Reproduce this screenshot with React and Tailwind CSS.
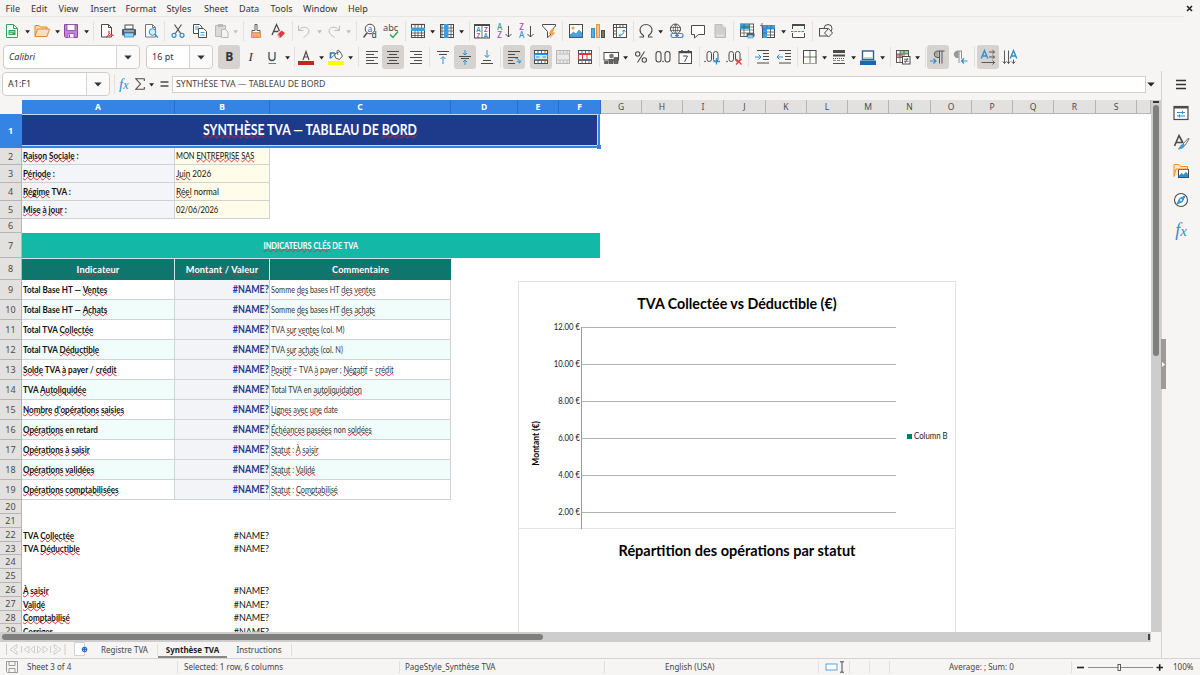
import { Fragment } from "react";

const K = "#4b4b4b";
const B = "#2f8fd0";

// toolbar icons, all drawn on a 16px box
const icons = {
  newDoc: (
    <>
      <path d="M2.5 1.5h7l4 4v9h-11z" fill="#fff" stroke="#36a55c" />
      <path d="M9.5 1.5v4h4" fill="none" stroke="#36a55c" />
      <rect x="4.5" y="7" width="7" height="5" fill="#36a55c" />
      <path d="M5.5 8.8h5M5.5 10.5h3" stroke="#fff" strokeWidth=".7" />
    </>
  ),
  open: (
    <>
      <path d="M1 13.5v-11h4l1.5 1.5h6.5v2" fill="#f9d9ae" stroke="#dd8a32" />
      <path d="M1 13.5 3.5 6h12l-2.5 7.5z" fill="#fbdfb8" stroke="#dd8a32" />
    </>
  ),
  save: (
    <>
      <path d="M1.5 1.5h13v13h-12l-1-1z" fill="#c583d6" stroke="#8e44a5" />
      <rect x="4" y="1.5" width="8" height="6" fill="#fff" stroke="#8e44a5" strokeWidth=".8" />
      <path d="M5 14.5v-4h6v4" fill="#fff" stroke="#8e44a5" strokeWidth=".8" />
      <path d="M6.5 11.5v3" stroke="#8e44a5" />
    </>
  ),
  pdf: (
    <>
      <path d="M2.5 1.5h7l3 3v9.5h-10z" fill="#fff" stroke={K} />
      <path d="M9.5 1.5v3h3" fill="none" stroke={K} />
      <path d="M7 14.5c3-2 3.5-5 3-6.5-1.2.5.3 4 4.5 4.3-2-.7-5 .2-7.5 2.2z" fill="#fff" stroke="#d9373d" strokeWidth=".9" />
    </>
  ),
  print: (
    <>
      <rect x="4" y="2" width="8" height="4" fill="#fff" stroke={K} />
      <rect x="1" y="6" width="14" height="6.5" rx="1" fill="#5a5a5a" />
      <path d="M3 8h10" stroke="#8ec9ec" strokeWidth="1.5" />
      <rect x="3.5" y="10" width="9" height="4" fill="#9fd1f0" stroke={B} strokeWidth=".8" />
    </>
  ),
  preview: (
    <>
      <path d="M2.5 1.5h7l3 3v9.5h-10z" fill="#fff" stroke="#777" />
      <path d="M9.5 1.5v3h3" fill="none" stroke="#777" />
      <circle cx="9.5" cy="9" r="3.3" fill="#d5ebf8" stroke={B} />
      <path d="m12 11.5 3 3" stroke={B} strokeWidth="1.3" />
    </>
  ),
  cut: (
    <>
      <path d="M4.5 1.5 11 11M11.5 1.5 5 11" stroke={K} fill="none" strokeWidth="1.1" />
      <circle cx="4" cy="12.3" r="2" fill="none" stroke={B} strokeWidth="1.2" />
      <circle cx="12" cy="12.3" r="2" fill="none" stroke={B} strokeWidth="1.2" />
    </>
  ),
  copy: (
    <>
      <path d="M1.5 1.5h6l2.5 2.5v6.5h-8.5z" fill="#fff" stroke={K} />
      <path d="M6.5 5.5h5l3 3v6h-8z" fill="#fff" stroke={K} />
      <path d="M3 4h4M3 6h3M8.5 9.5h4M8.5 12h4" stroke={B} strokeWidth=".9" />
    </>
  ),
  paste: (
    <>
      <path d="M1.5 2.5h10v11h-10z" fill="#d9d9d9" stroke="#b9b9b9" />
      <rect x="4" y="1" width="5" height="3" fill="#b9b9b9" />
      <path d="M7.5 6.5h4l2.5 2.5v5.5h-6.5z" fill="#f3f3f3" stroke="#b9b9b9" />
    </>
  ),
  brush: (
    <>
      <path d="M7 1.5h2v6h3v2.5h-8v-2.5h3z" fill="#fff" stroke={K} strokeWidth=".9" />
      <path d="M3.5 10h9v4.5h-9z" fill="#f6b26b" stroke="#e8923a" />
      <path d="M6 12v2.5M9 12v2.5" stroke="#e8923a" />
    </>
  ),
  clear: (
    <>
      <path d="M2 12 6.5 1.5 9.5 8M3.5 8.500h5" fill="none" stroke={K} strokeWidth="1.3" />
      <path d="m7.5 11.5 4-4 3.500 2.500-4 4.500-2 .5z" fill="#e0383e" />
      <path d="m7.5 11.5 2.5 3" stroke="#f5a3a5" strokeWidth="1.5" />
    </>
  ),
  undo: <path d="M2.5 2.5v5h5M3 7c3-4 10-3.5 10 1 0 3-3 4.5-5.5 6.5" fill="none" stroke="#bdbdbd" />,
  redo: <path d="M13.5 2.5v5h-5M13 7c-3-4-10-3.5-10 1 0 3 3 4.5 5.5 6.5" fill="none" stroke="#bdbdbd" />,
  find: (
    <>
      <circle cx="8" cy="6" r="4.8" fill="#fff" stroke={K} />
      <path d="M5 10 1.5 14.5" stroke={K} strokeWidth="1.4" />
      <text x="5.4" y="8.5" fontSize="8" fill={B} fontFamily="Noto Sans" fontWeight="600">a</text>
      <text x="9.5" y="15" fontSize="8.5" fill={K} fontFamily="Noto Sans" fontWeight="500">d</text>
    </>
  ),
  spell: (
    <>
      <text x="0" y="7.5" fontSize="9.2" fill={K} fontFamily="Noto Sans">abc</text>
      <path d="m7 11.5 3 3 5-6" fill="none" stroke="#2ba84a" strokeWidth="1.4" />
    </>
  ),
  row: (
    <>
      <rect x="1.5" y="1.5" width="13" height="13" fill="#fff" stroke={K} />
      <path d="M1.5 10h13M1.5 12.5h13M5 1.5v13M8 1.5v13M11.5 1.5v13" stroke={K} strokeWidth=".8" />
      <rect x="1" y="4.5" width="14" height="3.5" fill="#3f9edb" />
      <path d="M1 1.5h14" stroke={K} strokeWidth="1.2" />
    </>
  ),
  col: (
    <>
      <rect x="1.5" y="1.5" width="13" height="13" fill="#fff" stroke={K} />
      <path d="M1.5 5h13M1.5 8h13M1.5 11.5h13M12 1.5v13M3 1.5v13" stroke={K} strokeWidth=".8" />
      <rect x="5" y="1" width="4.5" height="14" fill="#3f9edb" />
    </>
  ),
  sort: (
    <>
      <rect x=".5" y="1.5" width="15" height="13.5" fill="#fff" stroke={K} />
      <path d="M0 2h16" stroke={K} strokeWidth="2" />
      <path d="M8 2v13" stroke={K} strokeWidth=".8" />
      <text x="2.2" y="8.7" fontSize="6.5" fill={B} fontFamily="Noto Sans" fontWeight="600">A</text>
      <text x="2.4" y="14.5" fontSize="6.5" fill="#a64bb8" fontFamily="Noto Sans" fontWeight="600">Z</text>
      <text x="10" y="8.7" fontSize="6.5" fill="#a64bb8" fontFamily="Noto Sans" fontWeight="600">Z</text>
      <text x="9.6" y="14.5" fontSize="6.5" fill={B} fontFamily="Noto Sans" fontWeight="600">A</text>
    </>
  ),
  az: (
    <>
      <text x="1" y="7" fontSize="8" fill={B} fontFamily="Noto Sans" fontWeight="500">A</text>
      <text x="1.3" y="15" fontSize="8" fill="#a64bb8" fontFamily="Noto Sans" fontWeight="500">Z</text>
      <path d="M12.5 3v11M9.500 11l3 3 3-3" fill="none" stroke={K} />
    </>
  ),
  za: (
    <>
      <text x="1.3" y="7" fontSize="8" fill="#a64bb8" fontFamily="Noto Sans" fontWeight="500">Z</text>
      <text x="1" y="15" fontSize="8" fill={B} fontFamily="Noto Sans" fontWeight="500">A</text>
      <path d="M12.5 3v11M9.500 11l3 3 3-3" fill="none" stroke={K} />
    </>
  ),
  filter: (
    <>
      <path d="M1.5 1.5h13v1.5l-5 5.5v3.500l-3 2.500V8.5l-5-5.5z" fill="#fff" stroke={K} />
      <path d="m11 6-3.500 5h3l-2 4.500 6-6h-3l2-3.500z" fill="#f4a043" />
    </>
  ),
  image: (
    <>
      <rect x="1.5" y="1.5" width="13" height="13" fill="#fff" stroke={K} />
      <path d="M2 14v-2l3.500-3 2.500 2 3-4 3 3v4z" fill="#4ba3dc" stroke={B} strokeWidth=".6" />
      <circle cx="5" cy="5" r="1.5" fill="#f4a043" />
    </>
  ),
  chart: (
    <>
      <rect x="1.5" y="5.5" width="3" height="9" fill="#5aaee3" stroke={B} />
      <rect x="6.5" y="1.5" width="3" height="13" fill="#f7c28a" stroke="#e8923a" />
      <rect x="11.5" y="7.5" width="3" height="7" fill="#777" stroke={K} />
    </>
  ),
  pivot: (
    <>
      <rect x="1.5" y="1.5" width="13" height="13" fill="#fff" stroke={K} />
      <path d="M1.5 4.5h13M4.5 1.5v13M8 2v2.5M11 2v2.5M2 8h2.5M2 11h2.5" stroke={K} strokeWidth=".9" />
      <path d="M7 12.5c3 0 5-2 5-5M7 12.5l1.5-1.7M7 12.5l1.7 1.5M12 7l-1.7 1.5M12 7l1.5 1.7" fill="none" stroke={B} />
    </>
  ),
  omega: (
    <path d="M1.5 14h4v-1.5C2.5 10.5 2 8.5 2 7c0-3 2.5-5.5 6-5.5s6 2.5 6 5.5c0 1.5-.5 3.5-3.5 5.5V14h4" fill="none" stroke={K} strokeWidth="1.1" />
  ),
  link: (
    <>
      <circle cx="7.5" cy="6" r="5" fill="#fff" stroke={K} />
      <path d="M2.5 4.5h10M2.5 7.5h10M7.5 1v10M7.5 1c-3 3-3 7 0 10M7.5 1c3 3 3 7 0 10" fill="none" stroke={K} strokeWidth=".7" />
      <rect x="3" y="10.5" width="6" height="4" rx="2" fill="#f6f5f4" stroke={B} strokeWidth="1.2" />
      <rect x="9" y="10.5" width="6" height="4" rx="2" fill="#f6f5f4" stroke={B} strokeWidth="1.2" />
      <path d="M7 12.5h4" stroke={B} />
    </>
  ),
  comment: <path d="M1.5 2.5h13v9h-6l-4 3.5v-3.5h-3z" fill="#fff" stroke={K} />,
  headFoot: (
    <>
      <path d="M3 1.5h7l3.5 3.5v9.5H3z" fill="#cfcfcf" stroke="#bcbcbc" />
      <path d="M10 1.5V5h3.5" fill="#eee" stroke="#bcbcbc" />
      <path d="M4.5 12.5h7" stroke="#e8e8e8" strokeWidth="1.5" />
    </>
  ),
  printArea: (
    <>
      <rect x="1.5" y="1" width="13" height="12.5" fill="#fff" stroke={K} strokeWidth=".9" />
      <rect x="1" y="1" width="9.5" height="5" fill="#3f9edb" />
      <path d="M1.5 4h13M1.5 7h13M1.5 10h13M5 1v12.5M10.5 1v12.5" stroke={K} strokeWidth=".7" />
      <rect x="7.5" y="10" width="8" height="4" rx="1" fill="#5a5a5a" />
      <rect x="9" y="12" width="5" height="3" fill="#9fd1f0" stroke={B} strokeWidth=".6" />
    </>
  ),
  freeze: (
    <>
      <rect x="2.5" y="2.5" width="12" height="12" fill="#fff" stroke={K} />
      <path d="M2.5 9h12M2.5 12h12M10.5 2.5v12" stroke={K} strokeWidth=".8" />
      <path d="M3 2h12v4H7v9H3z" fill="#3f9edb" />
      <path d="M3 6h12M3 10h4M7 2v4M11 2v4" stroke="#1a6ea8" strokeWidth=".7" />
      <path d="M2 0v5M0 2.500h5" stroke={B} />
    </>
  ),
  split: (
    <>
      <path d="M2.5 6V2h12v4M2.5 10v4.5h12V10" fill="#fff" stroke={K} />
      <path d="M2 2h13" stroke={K} strokeWidth="2" />
      <path d="M1 8.5h14" stroke={B} strokeDasharray="2.5 1" />
    </>
  ),
  shapes: (
    <>
      <circle cx="10" cy="5.5" r="4" fill="none" stroke={K} />
      <rect x="1.5" y="5.5" width="8" height="7.5" fill="#f6f5f4" stroke={K} />
      <path d="m10.5 5.500 4 4.500-4 4-4-4z" fill="#f6f5f4" stroke={K} />
    </>
  ),
  bold: <text x="4.3" y="12.4" fontSize="12" fontWeight="bold" fill="#333" fontFamily="Open Sans">B</text>,
  italic: <text x="5.5" y="12.4" fontSize="13" fontStyle="italic" fill="#333" fontFamily="Liberation Serif">I</text>,
  underline: (
    <>
      <path d="M5 3v6c0 3.3 6 3.3 6 0V3" fill="none" stroke={K} strokeWidth="1.3" />
      <path d="M4.5 14.5h7.5" stroke={B} />
    </>
  ),
  fontColor: (
    <>
      <path d="M5 11 8 2.5 11 11M5.8 8h4.500" fill="none" stroke={K} strokeWidth="1.2" />
      <rect x="0" y="12" width="16" height="4" fill="#c9211e" />
    </>
  ),
  highlight: (
    <>
      <path d="m6.500 5 5.500-2.500 2.500 4.500-3 3.500-4-1.500z" fill="#fff" stroke={K} strokeWidth=".9" />
      <path d="M10 6 9 2.500c0-1.800 2.300-1.800 2.500 0" fill="none" stroke={K} strokeWidth=".8" />
      <path d="M2.500 9.500V4h4.500" fill="none" stroke="#2a7ab0" strokeWidth="1.6" />
      <path d="m3 9 5-4.500" stroke="#2a7ab0" strokeWidth=".9" />
      <rect x="0" y="12" width="16" height="4" fill="#ffff00" />
    </>
  ),
  left: <path d="M2 2.5h12M2 5.5h8M2 8.5h12M2 11.5h8M2 14.5h12" stroke={K} />,
  center: <path d="M2 2.5h12M4 5.5h8M2 8.5h12M4 11.5h8M2 14.5h12" stroke={K} />,
  right: <path d="M2 2.5h12M6 5.5h8M2 8.5h12M6 11.5h8M2 14.5h12" stroke={K} />,
  top: (
    <>
      <path d="M2 2.5h12M4 5.5h8" stroke={K} />
      <path d="M8 15V8M5.5 10 8 7.5l2.5 2.5" fill="none" stroke={B} />
    </>
  ),
  middle: (
    <>
      <path d="M2 7.5h12M4 9.5h8" stroke={K} />
      <path d="M8 1v5M6 4l2 2 2-2M8 16v-5M6 13l2-2 2 2" fill="none" stroke={B} />
    </>
  ),
  bottom: (
    <>
      <path d="M4 11.5h8M2 14.5h12" stroke={K} />
      <path d="M8 1v7M5.5 6 8 8.5 10.5 6" fill="none" stroke={B} />
    </>
  ),
  wrap: (
    <>
      <path d="M2 2.5h12M2 5.5h7M2 8.5h10M2 11.5h5M2 14.5h7" stroke={K} />
      <path d="M9 9c3 0 4 1.5 4.5 4.5M11 12l2.5 2 1.500-2.500" fill="none" stroke={B} />
    </>
  ),
  merge: (
    <>
      <rect x="1.5" y="1.5" width="13" height="13" fill="#fff" stroke={K} />
      <path d="M1.5 4.5h13M1.5 11.5h13M5 1.5v3M8.5 1.5v3M12 1.5v3M5 11.5v3M8.5 11.5v3M12 11.5v3" stroke={K} strokeWidth=".8" />
      <rect x="1.5" y="5.5" width="13" height="5" fill="#d5ebf8" stroke={B} />
      <path d="M3 8h3.5M9.5 8H13" stroke={B} />
    </>
  ),
  unmerge: (
    <>
      <rect x="1.5" y="1.5" width="13" height="13" fill="#e9e9e9" stroke="#b5b5b5" />
      <path d="M1.5 5h13M1.5 11h13M5 1.5V5M8.5 1.5V5M12 1.5V5M5 11v3.5M8.5 11v3.5M12 11v3.5" stroke="#b5b5b5" strokeWidth=".8" />
    </>
  ),
  splitCells: (
    <>
      <rect x="1.5" y="1.5" width="13" height="13" fill="#fff" stroke={K} />
      <path d="M1.5 4.5h13M1.5 11.5h13M5 1.5v3M8.5 1.5v3M12 1.5v3M5 11.5v3M8.5 11.5v3M12 11.5v3" stroke={K} strokeWidth=".8" />
      <path d="M1.5 5.5h13M1.5 10.5h13M1.5 5.5v5M5.5 5.5v5M10 5.5v5M14.5 5.5v5" stroke="#d9373d" fill="none" />
    </>
  ),
  currency: (
    <>
      <rect x="1" y="3.5" width="14.5" height="7.5" fill="#fff" stroke={K} />
      <circle cx="8.5" cy="7" r="2.3" fill="#777" />
      <path d="M1.5 12.5h3.5v2H1.5zM6 10.5h4v4H6zM11 8.5h4v6h-4z" fill="#666" stroke={K} strokeWidth=".7" />
    </>
  ),
  percent: (
    <>
      <circle cx="4.7" cy="5" r="2.2" fill="none" stroke={K} strokeWidth="1.1" />
      <circle cx="11.3" cy="11" r="2.2" fill="none" stroke={K} strokeWidth="1.1" />
      <path d="M11.5 2.5 4.5 13.5" stroke={K} strokeWidth="1.1" />
    </>
  ),
  number: (
    <>
      <rect x="1" y="2.5" width="5" height="10.5" rx="2.5" fill="none" stroke={K} strokeWidth="1.1" />
      <rect x="10" y="2.5" width="5" height="10.5" rx="2.5" fill="none" stroke={K} strokeWidth="1.1" />
      <circle cx="8" cy="12.5" r=".8" fill={K} />
    </>
  ),
  date: (
    <>
      <rect x="2" y="2.5" width="12.5" height="12" fill="#fff" stroke={K} />
      <path d="M2 3.5h12.5M5 1v3M11.5 1v3" stroke={K} strokeWidth="1.5" />
      <path d="M6 7h4.500L7.500 13" fill="none" stroke={K} />
    </>
  ),
  decAdd: (
    <>
      <circle cx="1" cy="12.5" r=".8" fill={K} />
      <rect x="3" y="2.5" width="4.5" height="10" rx="2.2" fill="none" stroke={K} />
      <rect x="9.5" y="2.5" width="4.5" height="10" rx="2.2" fill="none" stroke={K} />
      <path d="M12.5 9v6.500M9.500 12.500h6.500" stroke={B} strokeWidth="1.3" />
    </>
  ),
  decDel: (
    <>
      <circle cx="1" cy="12.5" r=".8" fill={K} />
      <rect x="3" y="2.5" width="4.5" height="10" rx="2.2" fill="none" stroke={K} />
      <rect x="9.5" y="2.5" width="4.5" height="10" rx="2.2" fill="none" stroke={K} />
      <path d="m10 10 5.500 5.500M15.500 10 10 15.500" stroke="#e0383e" strokeWidth="1.3" />
    </>
  ),
  indent: (
    <>
      <path d="M3 1.5h12M9 4.5h6M9 7.5h6M9 10.5h6M3 14h12" stroke={K} />
      <path d="M1 8h6M4.5 5.5 7 8l-2.5 2.5" fill="none" stroke={B} />
    </>
  ),
  outdent: (
    <>
      <path d="M3 1.5h12M9 4.5h6M9 7.5h6M9 10.5h6M3 14h12" stroke={K} />
      <path d="M7 8H1M3.5 5.5 1 8l2.5 2.5" fill="none" stroke={B} />
    </>
  ),
  borders: (
    <>
      <rect x="1.5" y="1.5" width="12.5" height="13" fill="#fff" stroke={K} />
      <path d="M8 1.5v13M1.5 8h13" stroke={K} strokeWidth=".8" />
      <path d="M1.500 14.500h12.500" stroke="#e8923a" />
    </>
  ),
  borderStyle: (
    <>
      <path d="M2 2.5h12" stroke={K} strokeWidth="3" />
      <path d="M2 6.5h12" stroke={K} strokeWidth="2" />
      <path d="M2 9.5h12" stroke={K} strokeDasharray="1 1" />
      <path d="M2 11.5h12" stroke="#888" strokeDasharray="3 1" />
      <path d="M2 14.5h12" stroke={K} />
    </>
  ),
  borderColor: (
    <>
      <rect x="2.5" y="2" width="11" height="8.5" fill="#fff" stroke="#355f86" strokeWidth="1.4" />
      <path d="M4 9h8" stroke="#9fc4e4" strokeWidth="1.5" />
      <rect x="0" y="11.5" width="16" height="4.5" fill="#1f66b0" />
    </>
  ),
  conditional: (
    <>
      <rect x="1.5" y="1.5" width="12" height="12" fill="#fff" stroke={K} strokeWidth=".9" />
      <rect x="5" y="2" width="8" height="3" fill="#8fd19e" />
      <rect x="2" y="5" width="6" height="3.5" fill="#e98a8c" />
      <path d="M1.5 5h12M1.5 8.5h12M5 1.5v12M9 1.5v12" stroke={K} strokeWidth=".7" />
      <rect x="7.5" y="7.5" width="7.5" height="7.5" fill="#fff" stroke={K} />
      <path d="M9 10.3h4.5M9 12.3h4.5M12.5 9l-2.5 5" stroke={K} strokeWidth=".8" />
    </>
  ),
  ltr: (
    <>
      <path d="M8.5 9C2.5 9 3 2 8.5 2z" fill="#aaa" />
      <path d="M14.5 2H8C3 2 3 8.5 8 8.5h1M9.5 2v12.5M12 2v12.5" fill="none" stroke={K} strokeWidth=".9" />
      <path d="M0 12h6M3.5 9.5 6 12l-2.5 2.500" fill="none" stroke={B} strokeWidth="1.2" />
    </>
  ),
  rtl: (
    <>
      <path d="M6.5 9C.5 9 1 2 6.5 2z" fill="#999" />
      <path d="M10 2H6C1 2 1 8.500 6 8.500M7 2v12M9.500 2v8" fill="none" stroke="#888" strokeWidth=".9" />
      <path d="M15.5 12h-6M12 9.5 9.500 12l2.500 2.500" fill="none" stroke={B} strokeWidth="1.2" />
    </>
  ),
  horiz: (
    <>
      <path d="M1.2 9.5 4.5 1.5l3.3 8M2.5 7h4" fill="none" stroke={B} strokeWidth="1.4" />
      <path d="M9 3h5.500M12.5 1.2 14.5 3l-2 1.8M9 8h5.500M12.5 6.2l2 1.800-2 1.800M1.500 13.500h13M12.5 11.500l2 2-2 2" fill="none" stroke={K} strokeWidth=".9" />
    </>
  ),
  vert: (
    <>
      <path d="M8.2 9.5 11.5 1.5l3.300 8M9.500 7h4" fill="none" stroke={B} strokeWidth="1.4" />
      <path d="M2.5 1.5v13M.8 12.5l1.7 2 1.7-2M6.5 1.5v13M4.8 12.5l1.7 2 1.7-2M11.5 10.5v4M9.8 12.5l1.7 2 1.7-2" fill="none" stroke={K} strokeWidth=".9" />
    </>
  ),
  properties: (
    <>
      <rect x="1" y="1.5" width="14" height="13" fill="#fff" stroke={K} strokeWidth="1.2" />
      <path d="M1 2.5h14" stroke={K} strokeWidth="2" />
      <path d="M4 7.5h8M4 11h8M9.5 6v3M6.5 9.5v3" stroke={B} />
    </>
  ),
  styles: (
    <>
      <path d="M1.5 12 6 1.5 10 9M3 8.5h6" fill="none" stroke={K} strokeWidth="1.6" />
      <path d="m15.5 4-5.500 6 2 1.500 4-6.500z" fill="#fff" stroke={K} strokeWidth=".8" />
      <path d="M5 15c2 0 2-4.500 4.500-4.500 3 .5 2 4.500-4.500 4.500z" fill="#3f9edb" stroke={B} strokeWidth=".6" />
    </>
  ),
  gallery: (
    <>
      <path d="M1 13.5v-12h5l1.5 2h7v3" fill="#fde6c8" stroke="#e8923a" />
      <rect x="5.5" y="6.5" width="10" height="8" fill="#fff" stroke={K} />
      <path d="M6 14v-1.5L8.5 10l2 1.5L13 9l2 2v3z" fill="#2f8fd0" />
      <path d="M1 13.5 3 6h12" fill="none" stroke="#e8923a" />
    </>
  ),
  navigator: (
    <>
      <circle cx="8" cy="8" r="6.5" fill="#fff" stroke={K} strokeWidth="1.1" />
      <path d="M12 4 9.5 9.5 4 12l2.5-5.500z" fill="#3f9edb" stroke={B} />
      <circle cx="8" cy="8" r="1" fill="#fff" />
    </>
  ),
};

const Icon = ({ name }) => (
  <svg width="16" height="16" viewBox="0 0 16 16" className="shrink-0 overflow-visible">
    {icons[name]}
  </svg>
);

const Arrow = ({ off }) => (
  <svg width="7" height="4" viewBox="0 0 7 4" className="mt-0.5 shrink-0">
    <path d="M1.2.3h4.800L3.600 3.400z" fill={off ? "#bdbdbd" : "#222"} />
  </svg>
);

const gaps = {
  1: "ml-px",
  2: "ml-0.5",
  3: "ml-[3px]",
  4: "ml-1",
  5: "ml-[5px]",
  6: "ml-1.5",
  7: "ml-[7px]",
};

// [item, gap before it]. "v" = dropdown arrow, "x" = disabled arrow, "|" = separator, "*name" = pressed button
const standardBar = [
  ["newDoc", 4], ["v", 4], ["open", 3], ["v", 4], ["save", 2], ["v", 4], ["|", 3],
  ["pdf", 5], ["print", 6], ["preview", 6], ["|", 5],
  ["cut", 5], ["copy", 6], ["paste", 6], ["x", 2], ["|", 4],
  ["brush", 4], ["clear", 6], ["|", 6],
  ["undo", 3], ["x", 4], ["redo", 3], ["x", 3], ["|", 4],
  ["find", 5], ["spell", 5], ["|", 6],
  ["row", 4], ["v", 3], ["col", 3], ["v", 3], ["|", 4],
  ["sort", 4], ["az", 6], ["za", 6], ["filter", 7], ["|", 5],
  ["image", 5], ["chart", 6], ["pivot", 6], ["|", 5],
  ["omega", 4], ["v", 3], ["link", 4], ["comment", 6], ["headFoot", 6], ["|", 5],
  ["printArea", 5], ["freeze", 5], ["v", 4], ["split", 3], ["|", 6],
  ["shapes", 5],
];

const formatBar = [
  ["*bold", 5], ["italic", 3], ["underline", 5], ["v", 4], ["|", 3],
  ["fontColor", 3], ["v", 4], ["highlight", 3], ["v", 3], ["|", 4],
  ["left", 5], ["*center", 2], ["right", 4], ["|", 5],
  ["top", 5], ["*middle", 3], ["bottom", 3], ["|", 5],
  ["*wrap", 2], ["*merge", 5], ["unmerge", 3], ["splitCells", 6], ["|", 6],
  ["currency", 3], ["v", 3], ["percent", 4], ["number", 6], ["date", 6], ["|", 6],
  ["decAdd", 4], ["decDel", 6], ["|", 6],
  ["indent", 5], ["outdent", 6], ["|", 5],
  ["borders", 4], ["v", 3], ["borderStyle", 3], ["v", 3], ["borderColor", 3], ["v", 3], ["|", 4],
  ["conditional", 4], ["v", 3], ["|", 4],
  ["*ltr", 1], ["rtl", 3], ["|", 6],
  ["*horiz", 2], ["vert", 3],
];

const Items = ({ list }) =>
  list.map(([name, gap], i) => {
    let item = <Icon name={name} />;
    if (name === "v" || name === "x") item = <Arrow off={name === "x"} />;
    if (name === "|") item = <div className="h-5 w-px bg-[#e2e1e0]" />;
    if (name[0] === "*")
      item = (
        <div className="flex h-6 w-[22px] items-center justify-center rounded-[3px] bg-[#d5d2cf]">
          <Icon name={name.slice(1)} />
        </div>
      );
    return (
      <div key={i} className={`flex shrink-0 items-center ${gaps[gap]}`}>
        {item}
      </div>
    );
  });

const Combo = ({ className, children }) => (
  <div className={`flex h-6 shrink-0 items-stretch rounded border border-[#cfccc9] bg-white text-[9px] text-[#333] ${className}`}>
    <div className="flex flex-1 items-center pl-[5px]">{children}</div>
    <div className="flex w-[23px] items-center justify-center rounded-r border-l border-[#d9d6d3] bg-[#fbfafa]">
      <svg width="8" height="5" viewBox="0 0 8 5">
        <path d="M.3.5h7.400L4 4.500z" fill="#333" />
      </svg>
    </div>
  </div>
);

// words between underscores get the spell checker's wavy line
const Spell = ({ text, className = "" }) => (
  <span className={`whitespace-nowrap ${className}`}>
    {text.split("_").map((part, i) =>
      i % 2 ? (
        <span key={i} className="underline decoration-[#e0262b] decoration-wavy decoration-[0.6px] underline-offset-[-0.7px] [text-decoration-skip-ink:none]">
          {part}
        </span>
      ) : (
        <Fragment key={i}>{part}</Fragment>
      )
    )}
  </span>
);

const columns = [
  ["A", "w-[153px]", true], ["B", "w-[95px]", true], ["C", "w-[181px]", true], ["D", "w-[67px]", true],
  ["E", "w-[41px]", true], ["F", "w-[42px]", true], ["G", "w-[41px]"], ["H", "w-[41px]"], ["I", "w-[41px]"],
  ["J", "w-[42px]"], ["K", "w-[41px]"], ["L", "w-[41px]"], ["M", "w-[41px]"], ["N", "w-[42px]"],
  ["O", "w-[41px]"], ["P", "w-[41px]"], ["Q", "w-[41px]"], ["R", "w-[42px]"], ["S", "w-[41px]"], ["", "w-[14px]"],
];

const company = [
  ["h-[17px]", "_Raison_ _Sociale_ :", "MON _ENTREPRISE_ _SAS_", "scale-x-[0.8]"],
  ["h-[18px]", "_Période_ :", "_Juin_ 2026", "scale-x-[0.87]"],
  ["h-[18px]", "_Régime_ TVA :", "_Réel_ normal", "scale-x-[0.89]"],
  ["h-[18px]", "_Mise_ _à_ _jour_ :", "02/06/2026", "scale-x-[0.82]"],
];

const indicators = [
  ["Total Base HT — _Ventes_", "Somme _des_ bases HT _des_ _ventes_"],
  ["Total Base HT — _Achats_", "Somme _des_ bases HT _des_ _achats_"],
  ["Total TVA _Collectée_", "TVA _sur_ _ventes_ (col. M)"],
  ["Total TVA _Déductible_", "TVA _sur_ _achats_ (col. N)"],
  ["_Solde_ TVA _à_ payer / _crédit_", "_Positif_ = TVA _à_ payer ; _Négatif_ = _crédit_"],
  ["TVA _Autoliquidée_", "Total TVA en _autoliquidation_"],
  ["_Nombre_ _d'opérations_ _saisies_", "_Lignes_ _avec_ _une_ date"],
  ["_Opérations_ en retard", "_Échéances_ _passées_ non _soldées_"],
  ["_Opérations_ _à_ _saisir_", "_Statut_ : _À_ _saisir_"],
  ["_Opérations_ _validées_", "_Statut_ : _Validé_"],
  ["_Opérations_ _comptabilisées_", "_Statut_ : _Comptabilisé_"],
];

const plainRows = [
  ["h-3.5", ""],
  ["h-3.5", ""],
  ["h-3.5", "TVA _Collectée_"],
  ["h-[13px]", "TVA _Déductible_"],
  ["h-3.5", ""],
  ["h-3.5", ""],
  ["h-3.5", "_À_ _saisir_"],
  ["h-3.5", "_Validé_"],
  ["h-[13px]", "_Comptabilisé_"],
  ["h-3.5", "_Corriger_"],
];

const labelCell = "flex w-[153px] items-center pl-px text-[9.2px] font-bold";
const labelText = "origin-left scale-x-[0.88]";

const Row = ({ n, h, active, children }) => (
  <div className={`flex shrink-0 ${h}`}>
    <div
      className={`flex w-[22px] shrink-0 items-center justify-center border-r border-b font-['Noto_Sans'] text-[9px] ${
        active ? "border-[#3584e4] bg-[#3584e4] font-bold text-white" : "border-[#b6b5b4] bg-[#e2e1e0] text-[#4a4a4a]"
      }`}
    >
      {n}
    </div>
    {children}
  </div>
);

const Sheet = () => (
  <div className="relative h-[532px] w-[1151px] overflow-hidden bg-white">
    <div className="flex h-3.5">
      <div className="w-[22px] bg-[#f6f5f4]" />
      {columns.map(([name, w, active], i) => (
        <div
          key={i}
          className={`flex shrink-0 items-center justify-center border-r pt-px text-[8.5px] ${w} ${
            active ? "border-[#2a6fc4] bg-[#3584e4] font-bold text-white" : "border-b border-[#b6b5b4] bg-[#e2e1e0] text-[#4a4a4a]"
          }`}
        >
          {name}
        </div>
      ))}
    </div>

    <div className="flex flex-col font-[Lato,sans-serif] leading-none text-[#111]">
      <Row n={1} h="h-[34px]" active>
        <div className="relative flex w-[578px] items-center justify-center border-t border-r-2 border-b-2 border-t-[#c5daf6] border-r-[#3584e4] border-b-[#3584e4] bg-[#1e3a8a] text-[14.3px] font-bold text-white shadow-[inset_-1px_-1px_0_#c5daf6]">
          <Spell text="_SYNTHÈSE_ TVA — TABLEAU DE _BORD_" className="scale-x-[0.856]" />
          <div className="absolute -right-[3px] -bottom-[3px] size-1 bg-[#3584e4]" />
        </div>
      </Row>

      {company.map(([h, name, value, scale], i) => (
        <Row key={i} n={i + 2} h={h}>
          <div className={`border-r border-b border-[#cdd1d8] bg-[#f3f5f9] ${labelCell}`}>
            <Spell text={name} className={labelText} />
          </div>
          <div className="flex w-[95px] items-center border-r border-b border-[#d0d2d4] bg-[#fffcea] pl-px text-[9.3px]">
            <Spell text={value} className={`origin-left ${scale}`} />
          </div>
        </Row>
      ))}

      <Row n={6} h="h-3.5" />

      <Row n={7} h="h-[25px]">
        <div className="flex w-[578px] items-center justify-center bg-[#14b8a6] text-[9.2px] font-bold text-white">
          <Spell text="_INDICATEURS_ _CLÉS_ DE TVA" className="scale-x-[0.805]" />
        </div>
      </Row>

      <Row n={8} h="h-[22px]">
        <div className="flex border-t border-[#cfe5e2] bg-[#0f766e] text-[9.2px] font-bold tracking-[0.15px] text-white">
          <div className="flex w-[153px] items-center justify-center border-r border-[#cfe5e2]">
            <Spell text="_Indicateur_" />
          </div>
          <div className="flex w-[95px] items-center justify-center border-r border-[#cfe5e2]">
            <Spell text="_Montant_ / _Valeur_" />
          </div>
          <div className="flex w-[181px] items-center justify-center">
            <Spell text="_Commentaire_" />
          </div>
        </div>
      </Row>

      {indicators.map(([name, comment], i) => (
        <Row key={i} n={i + 9} h="h-5">
          <div className={`border-r border-b border-[#cfd4d6] pt-px ${labelCell} ${i % 2 ? "bg-[#f0fdfa]" : ""}`}>
            <Spell text={name} className={labelText} />
          </div>
          <div className="flex w-[95px] items-center justify-end border-r border-b border-[#cfd4d6] bg-[#f3f4f8] text-[10.4px] font-bold text-[#1e3a8a]">
            <span className="origin-right scale-x-[0.86]">#NAME?</span>
          </div>
          <div className={`flex w-[181px] items-center border-r border-b border-[#cfd4d6] pt-px pl-px text-[8.5px] text-[#333] ${i % 2 ? "bg-[#f0fdfa]" : ""}`}>
            <Spell text={comment} className="origin-left scale-x-[0.862]" />
          </div>
        </Row>
      ))}

      {plainRows.map(([h, name], i) => (
        <Row key={i} n={i + 20} h={h}>
          <div className={`pt-px ${labelCell}`}>
            <Spell text={name} className={labelText} />
          </div>
          <div className="flex w-[94px] items-center justify-end text-[9px] tracking-[-0.1px]">{name && "#NAME?"}</div>
        </Row>
      ))}
    </div>

    <Charts />
  </div>
);

const ticks = ["12.00 €", "10.00 €", "8.00 €", "6.00 €", "4.00 €", "2.00 €"];

// charts float over the cells
const Charts = () => (
  <div className="absolute top-[181px] left-[518px] w-[438px] font-[Lato,sans-serif] text-black">
    <div className="relative h-[248px] border border-[#e3e3e3] bg-white">
      <h2 className="mt-[13px] scale-x-[0.89] text-center text-[16px] leading-4 font-bold">
        TVA Collectée vs Déductible (€)
      </h2>
      <div className="mt-[-1px] ml-[9px] flex">
        <div className="flex w-4 items-center justify-center pt-[32px]">
          <span className="-rotate-90 text-[8.5px] font-bold whitespace-nowrap">Montant (€)</span>
        </div>
        <div className="mt-[13px] flex w-9 flex-col text-right text-[8.6px] leading-none text-[#222]">
          {ticks.map((t) => (
            <div key={t} className="h-[37px] origin-right scale-x-[0.9]">{t}</div>
          ))}
        </div>
        <div className="mt-[17px] ml-px h-[202px] w-[315px] border-l border-[#9a9a9a]">
          {ticks.map((t) => (
            <div key={t} className="h-[37px] border-t border-[#b3b3b3]" />
          ))}
        </div>
        <div className="mt-[118px] ml-[11px] flex h-4 items-center gap-0.5 whitespace-nowrap text-[#222]">
          <span className="size-[5px] bg-[#0f766e]" />
          <span className="origin-left scale-x-[0.9] text-[8.7px]">Column B</span>
        </div>
      </div>
    </div>
    <div className="-mt-px h-[120px] border border-[#e3e3e3] bg-white">
      <h2 className="mt-[13px] scale-x-[0.906] text-center text-[16px] leading-4 font-bold">
        Répartition des opérations par statut
      </h2>
    </div>
  </div>
);

const menus = [
  ["File", "w-[25.5px]"], ["Edit", "w-[27.5px]"], ["View", "w-8"], ["Insert", "w-[35px]"],
  ["Format", "w-[41px]"], ["Styles", "w-[37.5px]"], ["Sheet", "w-[35px]"], ["Data", "w-[31.5px]"],
  ["Tools", "w-[32.5px]"], ["Window", "w-[45px]"], ["Help", "w-8"],
];

const Divider = () => <div className="my-0.5 w-px shrink-0 self-stretch bg-[#e0dfde]" />;

export default function App() {
  return (
    <div className="flex h-[675px] w-[1200px] flex-col overflow-hidden bg-[#f6f5f4] font-['Noto_Sans',sans-serif] text-[#333]">
      <div className="mr-4 flex h-[17px] shrink-0 items-center border-b border-[#e6e5e4] pt-px pl-[5.5px] text-[9.1px]">
        {menus.map(([name, w]) => (
          <span key={name} className={`shrink-0 ${w}`}>{name}</span>
        ))}
        <svg width="7" height="7" viewBox="0 0 7 7" className="mr-[-9px] ml-auto overflow-visible">
          <path d="m1 1 5 5M6 1 1 6" stroke="#222" strokeWidth="1.6" />
        </svg>
      </div>

      <div className="flex h-[27px] shrink-0 items-center">
        <Items list={standardBar} />
      </div>

      <div className="flex h-[27px] shrink-0 items-center pb-px">
        <Combo className="ml-[3px] w-[137px] italic">Calibri</Combo>
        <Combo className="ml-1.5 w-[67px]">16 pt</Combo>
        <Items list={formatBar} />
      </div>

      <div className="flex min-h-0 flex-1">
        <div className="flex w-[1161px] shrink-0 flex-col">
          <div className="flex h-[29px] shrink-0 items-center pb-[3px]">
            <Combo className="ml-0.5 w-[108px]">A1:F1</Combo>
            <div className="ml-1 h-5 w-px bg-[#e2e1e0]" />
            <span className="ml-1 w-[13px] font-['Liberation_Serif'] text-[15px] leading-none text-[#2f8fd0] italic">
              f<span className="text-[12px]">x</span>
            </span>
            <svg width="10" height="12" viewBox="0 0 10 12" className="ml-[3px]">
              <path d="M9.3 3V.8H.8L5.5 6 .8 11.2h8.5V9" fill="none" stroke={K} strokeWidth="1.1" />
            </svg>
            <div className="ml-[3px]"><Arrow /></div>
            <svg width="9" height="6" viewBox="0 0 9 6" className="ml-[5px]">
              <path d="M.5 1h8M.5 5h8" stroke={K} strokeWidth="1.3" />
            </svg>
            <div className="mt-px ml-[3px] flex h-[17px] w-[974px] items-center border border-[#d2d0ce] bg-white pl-[3px] text-[8.7px] text-[#444]">
              SYNTHÈSE TVA — TABLEAU DE BORD
            </div>
            <svg width="8" height="5" viewBox="0 0 8 5" className="ml-px">
              <path d="M.3.5h7.400L4 4.500z" fill="#222" />
            </svg>
          </div>

          <div className="flex h-[532px] shrink-0">
            <Sheet />
            <div className="flex w-2.5 flex-col items-center bg-[#cdcdcd]">
              <div className="mt-px h-0.5 w-1.5 bg-[#333]" />
              <div className="mt-0.5 h-[251px] w-1.5 rounded-full bg-[#7f807e]" />
            </div>
          </div>

          <div className="flex h-2.5 w-[1151px] shrink-0 items-center justify-between bg-[#cdcdcd] pr-px pl-0.5">
            <div className="h-1.5 w-[541px] rounded-full bg-[#7f807e]" />
            <div className="h-1.5 w-0.5 bg-[#444]" />
          </div>

          <div className="flex flex-1 items-stretch text-[8px] text-[#444]">
            <svg width="62" height="13" viewBox="0 0 62 13" className="mt-px ml-[5px]" fill="none" stroke="#cfcecd">
              <path d="M1.500 1v11M12 1.500 5 6.500l7 5v-3L9 6.500l3-2zM16.500 3v7M24 3l-5 3.500L24 10zM29.500 3l-4 3.500 4 3.500zM32.500 3l4 3.500-4 3.500zM38 3l5 3.500L38 10zM45.500 3v7M49 1.500l7 5-7 5v-3l3-2-3-2zM60 1v11" />
            </svg>
            <svg width="14" height="15" viewBox="0 0 14 15" className="ml-[7px]">
              <path d="M.5.5H10.5V13.500H.5z" fill="#fff" stroke="#d3d2d1" />
              <circle cx="10.5" cy="7.5" r="2.2" fill="#fff" stroke="#2d6fb3" strokeWidth="1.2" />
              <path d="M10.500 6v3M9 7.500h3" stroke="#2d6fb3" />
            </svg>
            <div className="flex w-[69px] items-center justify-center pl-1">Registre TVA</div>
            <Divider />
            <div className="flex w-[69px] items-center justify-center border-b-2 border-[#8a8987] pt-px font-bold text-[#222]">Synthèse TVA</div>
            <div className="flex w-[64px] items-center justify-center">Instructions</div>
            <Divider />
          </div>
        </div>

        <div className="relative flex flex-1 flex-col items-center gap-[13px] border-l border-[#d5d3d1] pt-2">
          <svg width="12" height="11" viewBox="0 0 12 11" className="mb-0.5">
            <path d="M1 1.5h10M1 5.5h10M1 9.5h10" stroke="#333" strokeWidth="1.4" />
          </svg>
          <Icon name="properties" />
          <Icon name="styles" />
          <Icon name="gallery" />
          <Icon name="navigator" />
          <span className="mt-px font-['Liberation_Serif'] text-[18px] leading-4 text-[#2f8fd0] italic">
            f<span className="text-[15px]">x</span>
          </span>
          {/* handle that collapses the sidebar */}
          <div className="absolute top-[268px] -left-px flex h-[50px] w-[5px] items-center justify-center bg-[#9b9a98]">
            <svg width="3" height="5" viewBox="0 0 3 5"><path d="M0 0v5l3-2.5z" fill="#fff" /></svg>
          </div>
        </div>
      </div>

      <div className="flex h-[17px] shrink-0 items-center border-t border-[#d5d3d1] text-[8px] text-[#444]">
        <svg width="12" height="12" viewBox="0 0 12 12" className="ml-1.5" fill="none" stroke="#9a9a9a">
          <path d="M.5.5h11v11h-10l-1-1zM3 .5v4h6v-4M3 11.500v-4h6v4" />
        </svg>
        <span className="ml-[9px] w-[150px]">Sheet 3 of 4</span>
        <Divider />
        <span className="ml-1.5 w-[215px]">Selected: 1 row, 6 columns</span>
        <Divider />
        <span className="ml-[5px] w-[199px]">PageStyle_Synthèse TVA</span>
        <Divider />
        <span className="w-[213px] pl-[60px]">English (USA)</span>
        <Divider />
        <svg width="22" height="12" viewBox="0 0 22 12" className="ml-1.5">
          <rect x="1" y="3" width="11" height="6" fill="#fff" stroke="#5aa3d6" />
          <path d="M15 .8h4M15 11.2h4M17 1v10" stroke={K} />
        </svg>
        <div className="ml-0.5 flex gap-[19px] self-stretch">
          <Divider />
          <Divider />
          <Divider />
        </div>
        <span className="w-[181px] pl-[59px]">Average: ; Sum: 0</span>
        <Divider />
        <svg width="88" height="11" viewBox="0 0 88 11" className="ml-1">
          <path d="M1 5.5h7" stroke="#222" strokeWidth="1.6" />
          <path d="M12 5.5h65" stroke="#8d8c8a" />
          <rect x="42" y="2.5" width="2.5" height="6" fill="#fff" stroke={K} strokeWidth=".9" />
          <path d="M80.500 5.500h6.500M83.700 2.200v6.600" stroke="#222" strokeWidth="1.6" />
        </svg>
        <span className="ml-[9px]">100%</span>
      </div>
    </div>
  );
}
